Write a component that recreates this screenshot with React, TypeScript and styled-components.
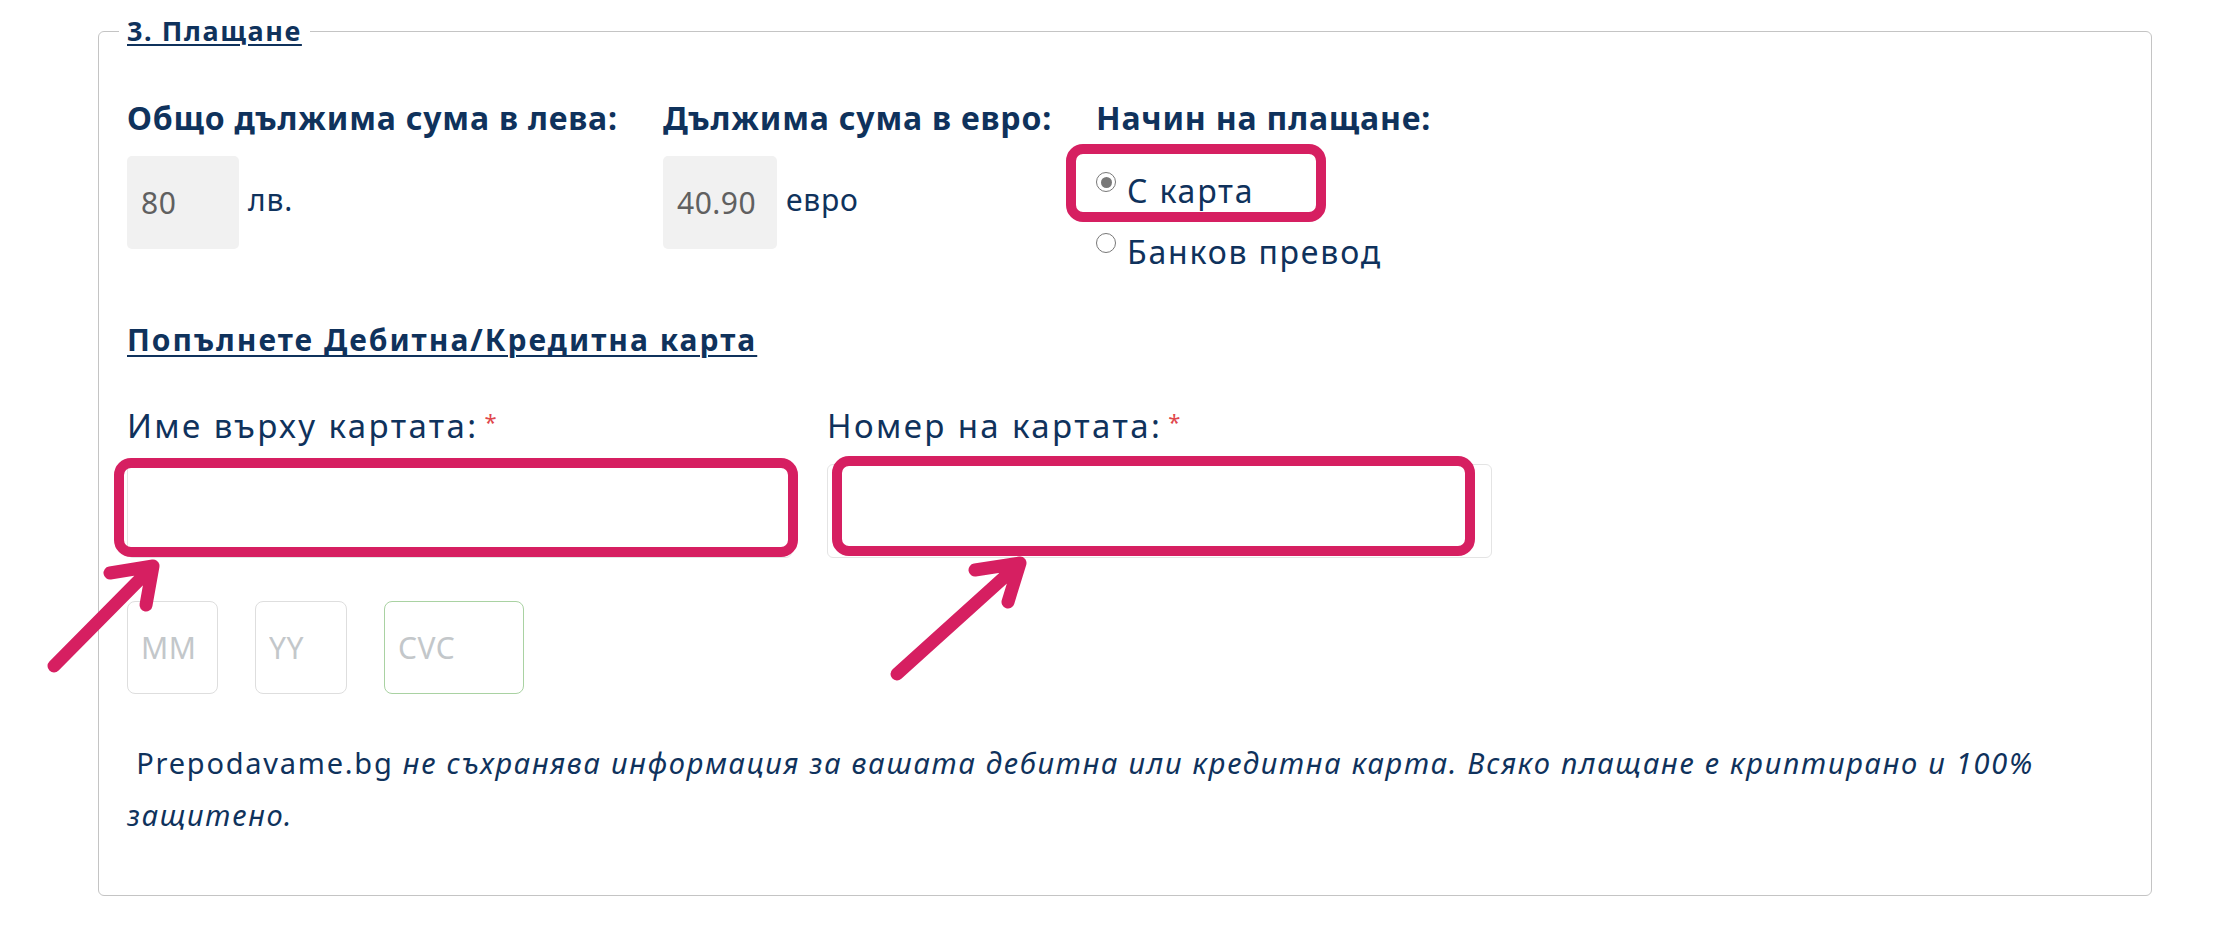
import React from "react";
import styled, { createGlobalStyle } from "styled-components";

const GlobalStyle = createGlobalStyle`
  html, body { margin: 0; padding: 0; background: #ffffff; }
  body { font-family: "Noto Sans", "Open Sans", sans-serif; }
  * { box-sizing: border-box; }
`;

const NAVY = "#0f325c";
const PINK = "#d61f61";

const Page = styled.div`
  position: relative;
  width: 2235px;
  height: 925px;
  padding: 15px 0 0 98px;
  overflow: hidden;
  background: #fff;
`;

const Fieldset = styled.fieldset`
  width: 2054px;
  margin: 0;
  padding: 0 28px 54px 28px;
  border: 1px solid #c4c4c4;
  border-radius: 6px;
  color: ${NAVY};
`;

const Legend = styled.legend`
  margin-left: -8px;
  padding: 0 8px;
  font-size: 27px;
  line-height: 32px;
  font-weight: 700;
  letter-spacing: 1.6px;
  text-decoration: underline;
  text-decoration-thickness: 2px;
  text-underline-offset: 3px;
  color: ${NAVY};
`;

const SummaryRow = styled.div`
  display: flex;
  padding-top: 51px;
  height: 273px;
`;

const Column = styled.div<{ $width?: number }>`
  display: flex;
  flex-direction: column;
  width: ${(p) => (p.$width ? `${p.$width}px` : "auto")};
`;

const Heading = styled.h4`
  margin: 0 0 18px;
  font-size: 32px;
  line-height: 40px;
  font-weight: 700;
  letter-spacing: 0.8px;
  color: ${NAVY};
  white-space: nowrap;
`;

const AmountLine = styled.div`
  display: flex;
  align-items: center;
`;

const AmountBox = styled.div<{ $width: number }>`
  display: flex;
  align-items: center;
  width: ${(p) => p.$width}px;
  height: 93px;
  padding-left: 14px;
  background: #f1f1f1;
  border-radius: 5px;
  font-size: 30px;
  letter-spacing: 0.5px;
  color: #606060;
`;

const Unit = styled.span`
  margin-left: 9px;
  margin-top: -6px;
  font-size: 30px;
  letter-spacing: 0.8px;
  color: ${NAVY};
`;

const RadioList = styled.div`
  display: flex;
  flex-direction: column;
  gap: 21px;
  padding-top: 15px;
`;

const RadioOption = styled.label`
  display: flex;
  align-items: flex-start;
  gap: 11px;
  font-size: 32px;
  line-height: 40px;
  letter-spacing: 1.8px;
  color: ${NAVY};
  white-space: nowrap;
`;

const RadioInput = styled.input.attrs({ type: "radio" })`
  appearance: none;
  flex: none;
  width: 20px;
  height: 20px;
  margin: 1px 0 0 0;
  border: 1.5px solid #787878;
  border-radius: 50%;
  background: #fff;
  display: grid;
  place-items: center;
  &:checked::after {
    content: "";
    width: 11px;
    height: 11px;
    border-radius: 50%;
    background: #787878;
  }
`;

const SubHeading = styled.h5`
  margin: 0 0 46px;
  font-size: 30px;
  line-height: 40px;
  font-weight: 700;
  letter-spacing: 2px;
  text-decoration: underline;
  text-decoration-thickness: 2px;
  text-underline-offset: 4px;
  color: ${NAVY};
`;

const FieldRow = styled.div`
  display: flex;
  gap: 35px;
`;

const Field = styled.div`
  display: flex;
  flex-direction: column;
  gap: 18px;
  width: 665px;
`;

const Label = styled.label`
  font-size: 33px;
  line-height: 40px;
  letter-spacing: 2.4px;
  color: ${NAVY};
  white-space: nowrap;
`;

const Required = styled.span`
  margin-left: 6px;
  color: #e0474c;
  font-size: 22px;
  letter-spacing: 0;
  vertical-align: top;
  line-height: 30px;
`;

const TextInput = styled.input`
  width: 100%;
  height: 94px;
  border: 1px solid #e4e4e4;
  border-radius: 6px;
  background: #fff;
  font-size: 24px;
  outline: none;
`;

const DateRow = styled.div`
  display: flex;
  gap: 37px;
  margin-top: 43px;
`;

const SmallInput = styled.input<{ $width: number; $accent?: boolean }>`
  width: ${(p) => p.$width}px;
  height: 93px;
  padding-left: 13px;
  border: 1px solid ${(p) => (p.$accent ? "#a9d2a2" : "#dedede")};
  border-radius: 8px;
  background: #fff;
  font-family: inherit;
  font-size: 30px;
  letter-spacing: 0.5px;
  outline: none;
  &::placeholder { color: #c3c7ca; }
`;

const Disclaimer = styled.p`
  margin: 43px 0 0;
  font-size: 29px;
  line-height: 52px;
  letter-spacing: 1.75px;
  color: ${NAVY};
`;

const Italic = styled.em`
  font-style: italic;
`;

const Overlay = styled.svg`
  position: absolute;
  left: 0;
  top: 0;
  pointer-events: none;
`;

export default function App() {
  return (
    <Page lang="bg">
      <GlobalStyle />
      <Fieldset>
        <Legend>3. Плащане</Legend>
        <SummaryRow>
          <Column $width={536}>
            <Heading>Общо дължима сума в лева:</Heading>
            <AmountLine>
              <AmountBox $width={112}>80</AmountBox>
              <Unit>лв.</Unit>
            </AmountLine>
          </Column>
          <Column $width={433}>
            <Heading>Дължима сума в евро:</Heading>
            <AmountLine>
              <AmountBox $width={114}>40.90</AmountBox>
              <Unit>евро</Unit>
            </AmountLine>
          </Column>
          <Column>
            <Heading>Начин на плащане:</Heading>
            <RadioList>
              <RadioOption>
                <RadioInput name="pay" defaultChecked />
                С карта
              </RadioOption>
              <RadioOption>
                <RadioInput name="pay" />
                Банков превод
              </RadioOption>
            </RadioList>
          </Column>
        </SummaryRow>
        <SubHeading>Попълнете Дебитна/Кредитна карта</SubHeading>
        <FieldRow>
          <Field>
            <Label>
              Име върху картата:<Required>*</Required>
            </Label>
            <TextInput />
          </Field>
          <Field>
            <Label>
              Номер на картата:<Required>*</Required>
            </Label>
            <TextInput />
          </Field>
        </FieldRow>
        <DateRow>
          <SmallInput $width={91} placeholder="MM" />
          <SmallInput $width={92} placeholder="YY" />
          <SmallInput $width={140} placeholder="CVC" $accent />
        </DateRow>
        <Disclaimer>
          {"\u00a0"}Prepodavame.bg{" "}
          <Italic>
            не съхранява информация за вашата дебитна или кредитна карта. Всяко плащане е криптирано и 100% защитено.
          </Italic>
        </Disclaimer>
      </Fieldset>
      <Overlay width="2235" height="925" viewBox="0 0 2235 925">
        <g fill="none" stroke={PINK} strokeWidth="10" strokeLinecap="round" strokeLinejoin="round">
          <rect x="1071" y="149" width="250" height="68" rx="12" />
          <rect x="119" y="463" width="674" height="89" rx="12" />
          <rect x="837" y="461" width="633" height="90" rx="12" />
          <path d="M54 666 L153 566 M110 573 L153 566 L146 605" strokeWidth="13" />
          <path d="M897 674 L1020 563 M975 570 L1020 563 L1008 602" strokeWidth="13" />
        </g>
      </Overlay>
    </Page>
  );
}
